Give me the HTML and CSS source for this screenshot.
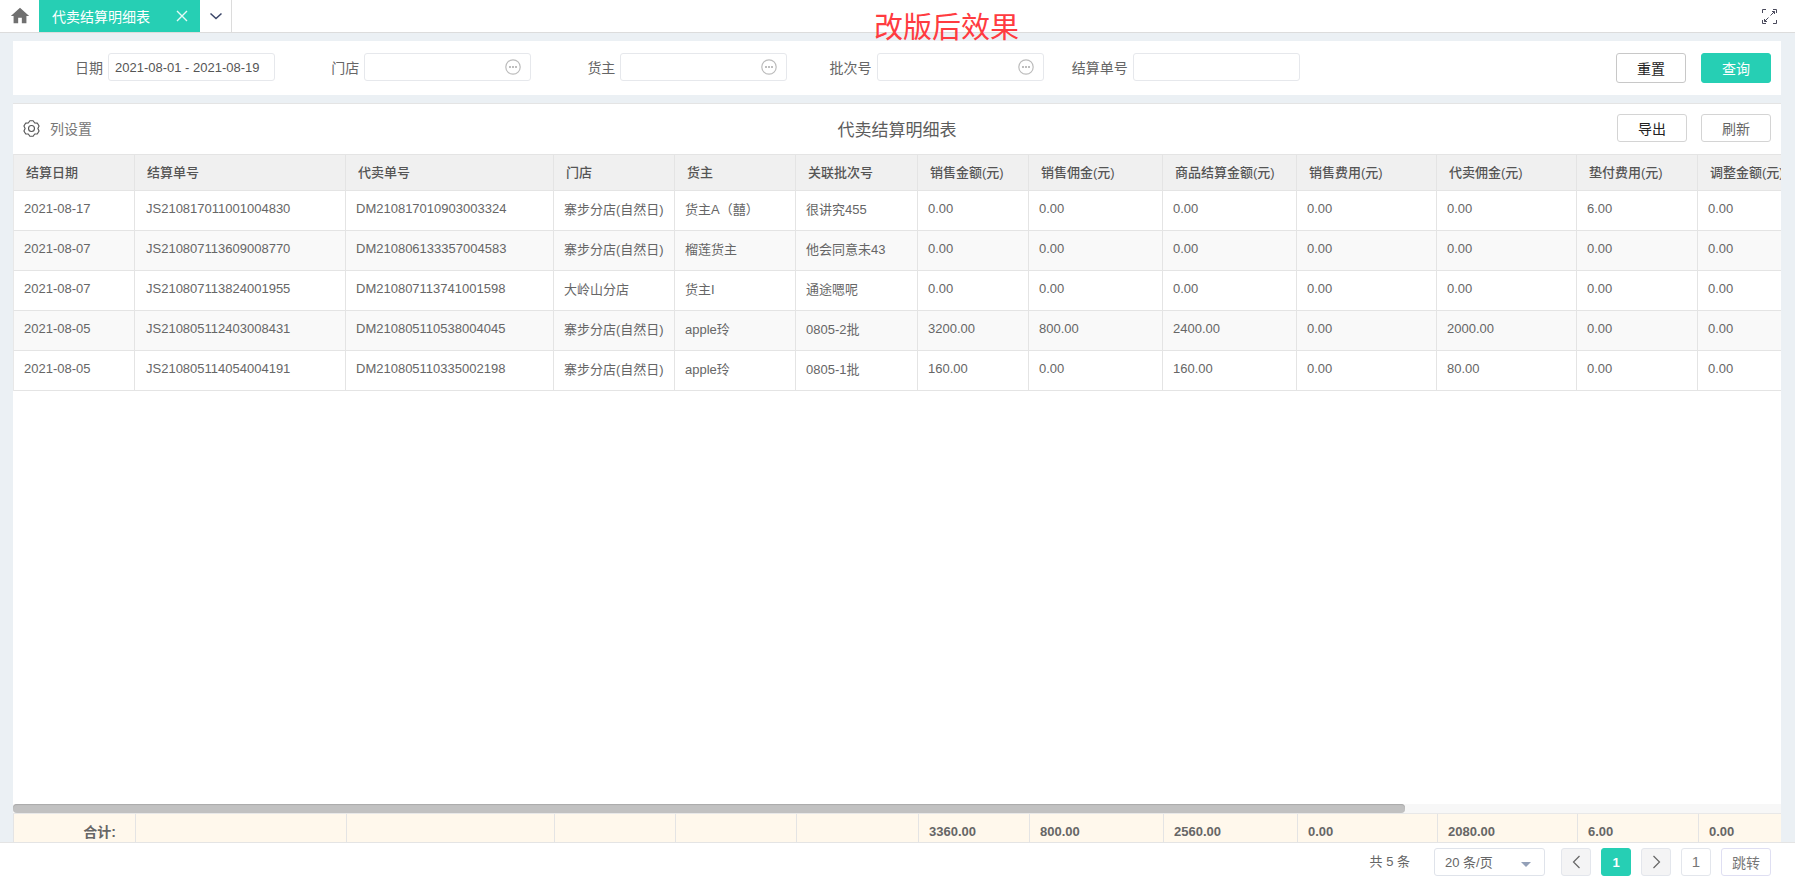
FILE: index.html
```html
<!DOCTYPE html>
<html lang="zh-CN">
<head>
  <meta charset="utf-8">
  <title>代卖结算明细表</title>
  <link rel="stylesheet" href="styles.css">
</head>
<body>
  <!-- tabs -->
  <div class="tabbar">
    <div class="home-tab">
      <svg width="22" height="22" viewBox="0 0 24 24"><path d="M10 20v-6h4v6h5v-8h3L12 3 2 12h3v8z" fill="#707070"/></svg>
    </div>
    <div class="tab-active">
      <span class="tab-name">代卖结算明细表</span>
      <svg class="tab-close" width="12" height="12" viewBox="0 0 12 12"><path d="M1 1l10 10M11 1L1 11" stroke="#e6faf6" stroke-width="1.4" fill="none"/></svg>
    </div>
    <div class="tab-more">
      <svg width="14" height="8" viewBox="0 0 14 8"><path d="M1.5 1.5L7 6.5l5.5-5" stroke="#3b4668" stroke-width="1.5" fill="none"/></svg>
    </div>
    <div class="fullscreen">
      <svg width="15" height="15" viewBox="0 0 15 15" fill="none" stroke="#4a4a5c" stroke-width="1">
        <path d="M.5 4V.5H4M11 .5h3.500V4M.5 11v3.500H4M11 14.500h3.500V11"/>
        <path d="M8.500 6.500l4-4M10 2.500h2.500V5M6.500 8.500l-4 4M2.500 10v2.500H5"/>
      </svg>
    </div>
  </div>

  <div class="overlay-note">改版后效果</div>

  <div class="main">
    <!-- filters -->
    <div class="filter-panel">
      <div class="field">
        <label>日期</label>
        <div class="field-box"><input type="text" value="2021-08-01 - 2021-08-19"></div>
      </div>
      <div class="field">
        <label>门店</label>
        <div class="field-box">
          <input type="text">
          <svg class="more-icon" width="16" height="16" viewBox="0 0 16 16"><circle cx="8" cy="8" r="7.200" fill="none" stroke="#bcbcbc" stroke-width="1.200"/><circle cx="5" cy="8" r="1" fill="#a8a8a8"/><circle cx="8" cy="8" r="1" fill="#a8a8a8"/><circle cx="11" cy="8" r="1" fill="#a8a8a8"/></svg>
        </div>
      </div>
      <div class="field">
        <label>货主</label>
        <div class="field-box">
          <input type="text">
          <svg class="more-icon" width="16" height="16" viewBox="0 0 16 16"><circle cx="8" cy="8" r="7.200" fill="none" stroke="#bcbcbc" stroke-width="1.200"/><circle cx="5" cy="8" r="1" fill="#a8a8a8"/><circle cx="8" cy="8" r="1" fill="#a8a8a8"/><circle cx="11" cy="8" r="1" fill="#a8a8a8"/></svg>
        </div>
      </div>
      <div class="field">
        <label>批次号</label>
        <div class="field-box">
          <input type="text">
          <svg class="more-icon" width="16" height="16" viewBox="0 0 16 16"><circle cx="8" cy="8" r="7.200" fill="none" stroke="#bcbcbc" stroke-width="1.200"/><circle cx="5" cy="8" r="1" fill="#a8a8a8"/><circle cx="8" cy="8" r="1" fill="#a8a8a8"/><circle cx="11" cy="8" r="1" fill="#a8a8a8"/></svg>
        </div>
      </div>
      <div class="field">
        <label>结算单号</label>
        <div class="field-box"><input type="text"></div>
      </div>
      <div class="filter-buttons">
        <button class="btn btn-reset">重置</button>
        <button class="btn btn-query">查询</button>
      </div>
    </div>

    <!-- table -->
    <div class="table-panel">
      <div class="toolbar">
        <div class="column-setting">
          <svg width="17" height="17" viewBox="0 0 16 16" fill="none" stroke="#555" stroke-width="1.050" stroke-linejoin="round"><path d="M6.440.66L9.560.66 11 2.800 13.570 2.980 15.130 5.680 14 8 15.130 10.320 13.570 13.020 11 13.200 9.560 15.340 6.440 15.340 5 13.200 2.430 13.020.87 10.320 2 8 .87 5.680 2.430 2.980 5 2.800z"/><circle cx="8" cy="8" r="2.800"/></svg>
          <span>列设置</span>
        </div>
        <div class="table-title">代卖结算明细表</div>
        <div class="toolbar-buttons">
          <button class="btn btn-export">导出</button>
          <button class="btn btn-refresh">刷新</button>
        </div>
      </div>

      <div class="table-scroll">
        <table class="data-table">
          <colgroup>
            <col class="c1"><col class="c2"><col class="c3"><col class="c4"><col class="c5"><col class="c6"><col class="c7"><col class="c8"><col class="c9"><col class="c10"><col class="c11"><col class="c12"><col class="c13">
          </colgroup>
          <thead>
            <tr>
              <th>结算日期</th><th>结算单号</th><th>代卖单号</th><th>门店</th><th>货主</th><th>关联批次号</th><th>销售金额(元)</th><th>销售佣金(元)</th><th>商品结算金额(元)</th><th>销售费用(元)</th><th>代卖佣金(元)</th><th>垫付费用(元)</th><th>调整金额(元)</th>
            </tr>
          </thead>
          <tbody>
            <tr>
              <td>2021-08-17</td><td>JS210817011001004830</td><td>DM210817010903003324</td><td>寨步分店(自然日)</td><td>货主A（囍）</td><td>很讲究455</td><td>0.00</td><td>0.00</td><td>0.00</td><td>0.00</td><td>0.00</td><td>6.00</td><td>0.00</td>
            </tr>
            <tr>
              <td>2021-08-07</td><td>JS210807113609008770</td><td>DM210806133357004583</td><td>寨步分店(自然日)</td><td>榴莲货主</td><td>他会同意未43</td><td>0.00</td><td>0.00</td><td>0.00</td><td>0.00</td><td>0.00</td><td>0.00</td><td>0.00</td>
            </tr>
            <tr>
              <td>2021-08-07</td><td>JS210807113824001955</td><td>DM210807113741001598</td><td>大岭山分店</td><td>货主I</td><td>通途嗯呢</td><td>0.00</td><td>0.00</td><td>0.00</td><td>0.00</td><td>0.00</td><td>0.00</td><td>0.00</td>
            </tr>
            <tr>
              <td>2021-08-05</td><td>JS210805112403008431</td><td>DM210805110538004045</td><td>寨步分店(自然日)</td><td>apple玲</td><td>0805-2批</td><td>3200.00</td><td>800.00</td><td>2400.00</td><td>0.00</td><td>2000.00</td><td>0.00</td><td>0.00</td>
            </tr>
            <tr>
              <td>2021-08-05</td><td>JS210805114054004191</td><td>DM210805110335002198</td><td>寨步分店(自然日)</td><td>apple玲</td><td>0805-1批</td><td>160.00</td><td>0.00</td><td>160.00</td><td>0.00</td><td>80.00</td><td>0.00</td><td>0.00</td>
            </tr>
          </tbody>
        </table>
      </div>

      <div class="hscroll"><div class="hscroll-thumb"></div></div>

      <div class="table-total">
        <table class="total-table">
          <colgroup>
            <col class="c1"><col class="c2"><col class="c3"><col class="c4"><col class="c5"><col class="c6"><col class="c7"><col class="c8"><col class="c9"><col class="c10"><col class="c11"><col class="c12"><col class="c13">
          </colgroup>
          <tr>
            <td class="total-label">合计:</td><td></td><td></td><td></td><td></td><td></td><td>3360.00</td><td>800.00</td><td>2560.00</td><td>0.00</td><td>2080.00</td><td>6.00</td><td>0.00</td>
          </tr>
        </table>
      </div>
    </div>
  </div>

  <!-- pager -->
  <div class="pager">
    <span class="pager-total">共 5 条</span>
    <div class="pager-size">
      <span class="pager-size-text">20 条/页</span>
      <i class="pager-caret"></i>
    </div>
    <div class="page-btn page-arrow">
      <svg width="9" height="14" viewBox="0 0 9 14"><path d="M7.500 1L1.500 7l6 6" fill="none" stroke="#666" stroke-width="1.200"/></svg>
    </div>
    <div class="page-btn page-current">1</div>
    <div class="page-btn page-arrow">
      <svg width="9" height="14" viewBox="0 0 9 14"><path d="M1.500 1l6 6-6 6" fill="none" stroke="#666" stroke-width="1.200"/></svg>
    </div>
    <div class="page-btn page-input">1</div>
    <div class="page-btn page-jump">跳转</div>
  </div>
</body>
</html>
```

FILE: styles.css
```css
* {
  box-sizing: border-box;
}

html, body {
  height: 100%;
}

body {
  margin: 0;
  height: 883px;
  overflow: hidden;
  display: flex;
  flex-direction: column;
  position: relative;
  background-color: #ebf0f4;
  color: #666;
  font-family: "Liberation Sans", "Noto Sans CJK SC", sans-serif;
  font-size: 13px;
}

/* tabs */
.tabbar {
  flex: none;
  height: 33px;
  display: flex;
  background-color: #fff;
  border-bottom: 1px solid #dcdcdc;
}

.home-tab {
  width: 39px;
  display: flex;
  align-items: center;
  justify-content: center;
}

.tab-active {
  width: 161px;
  padding: 0 13px;
  display: flex;
  align-items: center;
  background-color: #26cfb4;
  color: #fff;
  font-size: 14px;
}

.tab-name {
  flex: none;
  white-space: nowrap;
}

.tab-close {
  flex: none;
  margin-left: 26px;
}

.tab-more {
  width: 32px;
  display: flex;
  align-items: center;
  justify-content: center;
  border-right: 1px solid #dcdcdc;
}

.fullscreen {
  margin-left: auto;
  padding-right: 18px;
  display: flex;
  align-items: center;
}

.overlay-note {
  position: absolute;
  left: 874px;
  top: 8px;
  font-size: 29px;
  line-height: 40px;
  color: #ff3b40;
}

/* page body */
.main {
  flex: 1;
  min-height: 0;
  padding: 8px 14px 0 13px;
  display: flex;
  flex-direction: column;
  gap: 8px;
}

.filter-panel {
  flex: none;
  height: 54px;
  padding: 12px 10px 0 6px;
  display: flex;
  align-items: flex-start;
  background-color: #fff;
}

.field {
  width: 256.200px;
  display: flex;
  align-items: center;
}

.field label {
  width: 84px;
  margin-right: 5px;
  text-align: right;
  font-size: 14px;
  color: #666;
}

.field-box {
  width: 167px;
  height: 28px;
  display: flex;
  align-items: center;
  background-color: #fff;
  border: 1px solid #e6e8ec;
  border-radius: 3px;
}

.field-box input {
  flex: 1;
  min-width: 0;
  height: 100%;
  padding: 0 6px;
  border: none;
  outline: none;
  background: transparent;
  color: #555;
  font-family: inherit;
  font-size: 13px;
}

.more-icon {
  flex: none;
  margin-right: 9px;
}

.filter-buttons {
  margin-left: auto;
  display: flex;
  gap: 15px;
}

.btn {
  width: 70px;
  height: 30px;
  padding: 0;
  background-color: #fff;
  border: 1px solid #c8c8c8;
  border-radius: 3px;
  color: #222;
  font-family: inherit;
  font-size: 14px;
}

.btn-query {
  border-color: #26cfb4;
  background-color: #26cfb4;
  color: #fff;
}

.btn-export,
.btn-refresh {
  height: 28px;
  border-color: #d4d4d4;
}

.btn-refresh {
  color: #666;
}

/* table panel */
.table-panel {
  flex: 1;
  min-height: 0;
  display: flex;
  flex-direction: column;
  background-color: #fff;
  border-top: 1px solid #e4e4e4;
}

.toolbar {
  flex: none;
  height: 50px;
  padding: 0 10px 2px;
  display: grid;
  grid-template-columns: 1fr auto 1fr;
  align-items: center;
}

.column-setting {
  display: flex;
  align-items: center;
  gap: 10px;
  font-size: 14px;
  color: #777;
}

.table-title {
  font-size: 17px;
  color: #5c5c5c;
}

.toolbar-buttons {
  display: flex;
  justify-content: flex-end;
  gap: 14px;
}

.table-scroll {
  flex: 1;
  min-height: 0;
  overflow: hidden;
}

.hscroll {
  flex: none;
  height: 9px;
  background-color: #f7f7f7;
}

.hscroll-thumb {
  width: 1392px;
  height: 100%;
  background-color: #c1c1c1;
  border-radius: 4px;
  box-shadow: inset 0 1px 1px #aaa;
}

.data-table,
.total-table {
  width: 2246px;
  table-layout: fixed;
  border-collapse: separate;
  border-spacing: 0;
}

.c1 { width: 122px; }
.c2 { width: 211px; }
.c3 { width: 208px; }
.c4 { width: 121px; }
.c5 { width: 121px; }
.c6 { width: 122px; }
.c7 { width: 111px; }
.c8 { width: 134px; }
.c9 { width: 134px; }
.c10 { width: 140px; }
.c11 { width: 140px; }
.c12 { width: 121px; }
.c13 { width: 561px; }

.data-table th {
  height: 37px;
  padding: 0 12px 2px;
  background-color: #f0f0f0;
  border-top: 1px solid #e4e4e4;
  border-bottom: 1px solid #e4e4e4;
  border-right: 1px solid #e4e4e4;
  text-align: left;
  font-weight: 500;
  color: #555;
  white-space: nowrap;
}

.data-table td {
  height: 40px;
  padding: 0 10px 4px;
  border-bottom: 1px solid #e4e4e4;
  border-right: 1px solid #e4e4e4;
  color: #666;
  white-space: nowrap;
}

.data-table td:nth-child(2) {
  padding-left: 11px;
}

.data-table th:first-child,
.data-table td:first-child {
  border-left: 1px solid #e8e8e8;
}

.data-table tbody tr:nth-child(even) td {
  background-color: #f9f9f9;
}

.table-total {
  flex: none;
  height: 29px;
  overflow: hidden;
  background-color: #fff8ec;
  border-top: 1px solid #e8e8e8;
  border-left: 1px solid #e4e4e4;
}

.total-table td {
  height: 34px;
  padding: 0 10px;
  background-color: #fff8ec;
  border-right: 1px solid #e4e4e4;
  font-weight: bold;
  color: #666;
  white-space: nowrap;
}

.total-table .total-label {
  padding-right: 19px;
  text-align: right;
  font-size: 14px;
}

/* pager */
.pager {
  flex: none;
  height: 41px;
  padding: 5px 24px 0 0;
  display: flex;
  align-items: flex-start;
  justify-content: flex-end;
  gap: 10px;
  background-color: #fff;
  border-top: 1px solid #e4e4e4;
  position: relative;
}

.pager-total {
  line-height: 28px;
  margin-right: 14px;
  color: #666;
}

.pager-size {
  width: 111px;
  height: 28px;
  margin-right: 6px;
  padding: 0 10px;
  display: flex;
  align-items: center;
  justify-content: space-between;
  border: 1px solid #dfe3ea;
  border-radius: 3px;
  color: #666;
}

.pager-size-text {
  padding-bottom: 2px;
}

.pager-caret {
  width: 0;
  height: 0;
  margin: 4px 3px 0 0;
  border-left: 5px solid transparent;
  border-right: 5px solid transparent;
  border-top: 5px solid #93a0b8;
}

.page-btn {
  width: 30px;
  height: 28px;
  display: flex;
  align-items: center;
  justify-content: center;
  border: 1px solid #e3e6ec;
  border-radius: 3px;
  color: #666;
}

.page-arrow {
  background-color: #f4f4f5;
}

.page-current {
  border-color: #26cfb4;
  background-color: #26cfb4;
  color: #fff;
  font-weight: bold;
}

.page-input {
  padding-bottom: 2px;
  font-size: 15px;
  color: #777;
}

.page-jump {
  width: 50px;
  border-color: #dfdff2;
  font-size: 14px;
  color: #777;
}
```
